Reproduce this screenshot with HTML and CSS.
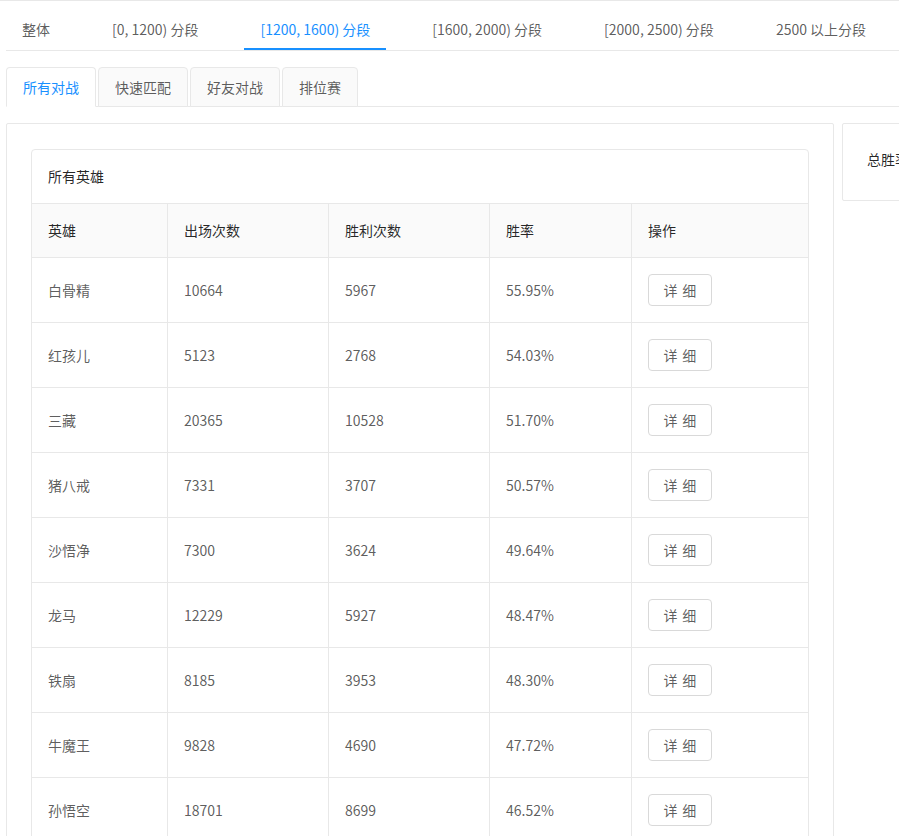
FILE: index.html
```html
<!DOCTYPE html>
<html lang="zh-CN">
<head>
<meta charset="utf-8">
<title>英雄胜率</title>
<link rel="stylesheet" href="styles.css">
</head>
<body>
<div class="page">
  <div class="seg-tabs">
    <div class="seg-tab">整体</div>
    <div class="seg-tab">[0, 1200) 分段</div>
    <div class="seg-tab active">[1200, 1600) 分段</div>
    <div class="seg-tab">[1600, 2000) 分段</div>
    <div class="seg-tab">[2000, 2500) 分段</div>
    <div class="seg-tab">2500 以上分段</div>
  </div>

  <div class="type-tabs">
    <div class="type-tab active">所有对战</div>
    <div class="type-tab">快速匹配</div>
    <div class="type-tab">好友对战</div>
    <div class="type-tab">排位赛</div>
  </div>

  <div class="content-row">
    <div class="main-card">
      <div class="hero-table">
        <div class="hero-title">所有英雄</div>
        <table class="grid">
          <thead>
            <tr>
              <th class="c1">英雄</th>
              <th class="c2">出场次数</th>
              <th class="c3">胜利次数</th>
              <th class="c4">胜率</th>
              <th class="c5">操作</th>
            </tr>
          </thead>
          <tbody>
            <tr><td>白骨精</td><td>10664</td><td>5967</td><td>55.95%</td><td><button class="btn"><span>详细</span></button></td></tr>
            <tr><td>红孩儿</td><td>5123</td><td>2768</td><td>54.03%</td><td><button class="btn"><span>详细</span></button></td></tr>
            <tr><td>三藏</td><td>20365</td><td>10528</td><td>51.70%</td><td><button class="btn"><span>详细</span></button></td></tr>
            <tr><td>猪八戒</td><td>7331</td><td>3707</td><td>50.57%</td><td><button class="btn"><span>详细</span></button></td></tr>
            <tr><td>沙悟净</td><td>7300</td><td>3624</td><td>49.64%</td><td><button class="btn"><span>详细</span></button></td></tr>
            <tr><td>龙马</td><td>12229</td><td>5927</td><td>48.47%</td><td><button class="btn"><span>详细</span></button></td></tr>
            <tr><td>铁扇</td><td>8185</td><td>3953</td><td>48.30%</td><td><button class="btn"><span>详细</span></button></td></tr>
            <tr><td>牛魔王</td><td>9828</td><td>4690</td><td>47.72%</td><td><button class="btn"><span>详细</span></button></td></tr>
            <tr><td>孙悟空</td><td>18701</td><td>8699</td><td>46.52%</td><td><button class="btn"><span>详细</span></button></td></tr>
          </tbody>
        </table>
      </div>
    </div>
    <div class="side-card">
      <div class="side-title">总胜率</div>
    </div>
  </div>
</div>
</body>
</html>
```

FILE: styles.css
```css
html, body {
  margin: 0;
  padding: 0;
  overflow: hidden;
  background: #fff;
}

body {
  font-family: "Noto Sans CJK SC", "Noto Sans", sans-serif;
  font-size: 14px;
  line-height: 21px;
  color: rgba(0, 0, 0, 0.65);
}

.page {
  width: 1300px;
  border-top: 1px solid #e8e8e8;
  padding-left: 6px;
}

/* segment tabs */
.seg-tabs {
  display: flex;
  border-bottom: 1px solid #e8e8e8;
}

.seg-tab {
  padding: 18px 16px 8px;
  margin-right: 30px;
  line-height: 21px;
  color: rgba(0, 0, 0, 0.65);
  border-bottom: 2px solid transparent;
  white-space: nowrap;
}

.seg-tab.active {
  color: #1890ff;
  border-bottom-color: #1890ff;
}

/* card type tabs */
.type-tabs {
  display: flex;
  margin-top: 16px;
  height: 39px;
  border-bottom: 1px solid #e8e8e8;
}

.type-tab {
  height: 40px;
  box-sizing: border-box;
  line-height: 38px;
  padding: 0 16px;
  margin-right: 2px;
  border: 1px solid #e8e8e8;
  border-radius: 4px 4px 0 0;
  background: #fafafa;
  color: rgba(0, 0, 0, 0.65);
  white-space: nowrap;
}

.type-tab.active {
  background: #fff;
  color: #1890ff;
  border-bottom-color: #fff;
}

/* content */
.content-row {
  display: flex;
  align-items: flex-start;
  gap: 8px;
  margin-top: 16px;
}

.main-card {
  width: 828px;
  box-sizing: border-box;
  border: 1px solid #e8e8e8;
  border-radius: 2px;
  padding: 25px 24px 24px;
  flex: none;
}

.side-card {
  width: 300px;
  height: 78px;
  box-sizing: border-box;
  border: 1px solid #e8e8e8;
  border-radius: 2px;
  padding: 24px;
  flex: none;
}

.side-title {
  color: rgba(0, 0, 0, 0.85);
  padding-top: 1px;
  white-space: nowrap;
}

.hero-table {
  width: 778px;
  box-sizing: border-box;
  border: 1px solid #e8e8e8;
  border-radius: 4px;
}

.hero-title {
  padding: 16px;
  line-height: 21px;
  color: rgba(0, 0, 0, 0.85);
  border-bottom: 1px solid #e8e8e8;
}

.grid {
  width: 776px;
  table-layout: fixed;
  border-collapse: separate;
  border-spacing: 0;
}

.grid th,
.grid td {
  box-sizing: border-box;
  padding: 16px;
  text-align: left;
  vertical-align: middle;
  border-right: 1px solid #e8e8e8;
  border-bottom: 1px solid #e8e8e8;
  line-height: 21px;
}

.grid th:last-child,
.grid td:last-child {
  border-right: none;
}

.grid th {
  background: #fafafa;
  font-weight: 400;
  color: rgba(0, 0, 0, 0.85);
}

.grid td {
  color: rgba(0, 0, 0, 0.65);
}

.c1 { width: 136px; }
.c2 { width: 161px; }
.c3 { width: 161px; }
.c4 { width: 142px; }
.c5 { width: 176px; }

.btn {
  display: block;
  height: 32px;
  width: 64px;
  padding: 0;
  border: 1px solid #d9d9d9;
  border-radius: 4px;
  background: #fff;
  font-family: inherit;
  font-size: 14px;
  line-height: 30px;
  color: rgba(0, 0, 0, 0.65);
  white-space: nowrap;
  text-align: center;
  cursor: pointer;
}

.btn span {
  letter-spacing: 0.34em;
  margin-right: -0.34em;
}
```
